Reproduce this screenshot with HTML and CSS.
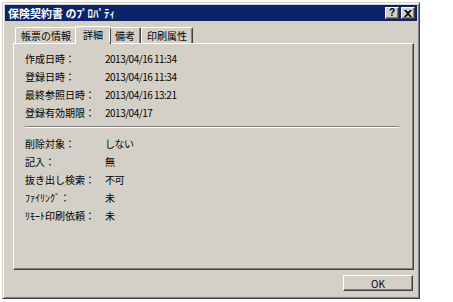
FILE: index.html
```html
<!DOCTYPE html>
<html lang="ja">
<head>
    <meta charset="UTF-8">
    <title>保険契約書 のﾌﾟﾛﾊﾟﾃｨ</title>
    <link rel="stylesheet" href="styles.css">
</head>
<body>
    <div class="window">
        <div class="titlebar">
            <span class="title">保険契約書 のﾌﾟﾛﾊﾟﾃｨ</span>
            <div class="caption-buttons">
                <button class="cap-btn help">?</button>
                <button class="cap-btn close">
                    <svg width="8" height="7" viewBox="0 0 8 7"><path d="M0 0h2l2 2 2-2h2L5 3.5 8 7H6L4 5 2 7H0l3-3.5z" fill="#000"/></svg>
                </button>
            </div>
        </div>

        <div class="dialog-body">
            <!-- tabs -->
            <div class="tabs">
                <div class="tab">帳票の情報</div>
                <div class="tab active">詳細</div>
                <div class="tab">備考</div>
                <div class="tab">印刷属性</div>
            </div>

            <div class="panel">
                <div class="rows">
                    <div class="label">作成日時：</div><div class="value">2013/04/16 11:34</div>
                    <div class="label">登録日時：</div><div class="value">2013/04/16 11:34</div>
                    <div class="label">最終参照日時：</div><div class="value">2013/04/16 13:21</div>
                    <div class="label">登録有効期限：</div><div class="value">2013/04/17</div>
                </div>

                <div class="separator"></div>

                <div class="rows">
                    <div class="label">削除対象：</div><div class="value">しない</div>
                    <div class="label">記入：</div><div class="value">無</div>
                    <div class="label">抜き出し検索：</div><div class="value">不可</div>
                    <div class="label">ﾌｧｲﾘﾝｸﾞ：</div><div class="value">未</div>
                    <div class="label">ﾘﾓｰﾄ印刷依頼：</div><div class="value">未</div>
                </div>
            </div>

            <div class="footer">
                <button class="ok-button">OK</button>
            </div>
        </div>
    </div>
</body>
</html>
```

FILE: styles.css
```css
* {
    box-sizing: border-box;
    margin: 0;
    padding: 0;
}

body {
    background: #ffffff;
    font-family: "Noto Sans CJK JP", "Liberation Sans", sans-serif;
    font-size: 10px;
    color: #000;
}

.window {
    margin: 2px 0 0 2px;
    width: 418px;
    height: 297px;
    background: #d4d0c8;
    border: 1px solid;
    border-color: #d4d0c8 #404040 #404040 #d4d0c8;
    box-shadow: inset 1px 1px 0 #ffffff, inset -1px -1px 0 #808080;
    padding: 2px;
    display: flex;
    flex-direction: column;
}

.titlebar {
    height: 16px;
    background: #0a246a;
    display: flex;
    align-items: center;
    justify-content: space-between;
    padding: 0 2px 0 3px;
}

.title {
    color: #ffffff;
    font-weight: bold;
    font-size: 11px;
    line-height: 16px;
}

.caption-buttons {
    display: flex;
    gap: 2px;
}

.cap-btn {
    width: 14px;
    height: 12px;
    background: #d4d0c8;
    border: 1px solid;
    border-color: #ffffff #404040 #404040 #ffffff;
    box-shadow: inset -1px -1px 0 #808080;
    display: flex;
    align-items: center;
    justify-content: center;
    font-family: "Liberation Sans", sans-serif;
    font-weight: bold;
    font-size: 10px;
    line-height: 10px;
    padding: 0;
}

.dialog-body {
    flex: 1;
    display: flex;
    flex-direction: column;
    padding: 5px 3px 0 8px;
}

.tabs {
    display: flex;
    height: 17px;
    align-items: flex-end;
    padding-left: 2px;
    position: relative;
    z-index: 1;
}

.tab {
    height: 16px;
    padding: 0 5px;
    line-height: 15px;
    border-left: 1px solid #ffffff;
    border-top: 1px solid #ffffff;
    border-right: 1px solid #404040;
    box-shadow: inset -1px 0 0 #808080;
    border-radius: 2px 2px 0 0;
    color: #000;
}

.tab.active {
    height: 18px;
    margin: 0 -2px -1px;
    padding: 0 7px;
    background: #d4d0c8;
    line-height: 16px;
}

.panel {
    height: 227px;
    border: 1px solid;
    border-color: #ffffff #404040 #404040 #ffffff;
    box-shadow: inset -1px -1px 0 #808080;
    padding: 5px 14px 0 11px;
}

.rows {
    display: grid;
    grid-template-columns: 80px 1fr;
    grid-auto-rows: 18px;
    align-items: center;
}

.value {
    letter-spacing: -0.5px;
}

.separator {
    margin: 5px 0 6px;
    height: 2px;
    border-top: 1px solid #808080;
    border-bottom: 1px solid #ffffff;
}

.footer {
    display: flex;
    justify-content: flex-end;
    padding-top: 5px;
    padding-right: 1px;
}

.ok-button {
    width: 70px;
    height: 16px;
    background: #d4d0c8;
    border: 1px solid;
    border-color: #ffffff #404040 #404040 #ffffff;
    box-shadow: inset -1px -1px 0 #808080;
    font-family: "Noto Sans CJK JP", "Liberation Sans", sans-serif;
    font-size: 10px;
    line-height: 13px;
    color: #000;
}
```
